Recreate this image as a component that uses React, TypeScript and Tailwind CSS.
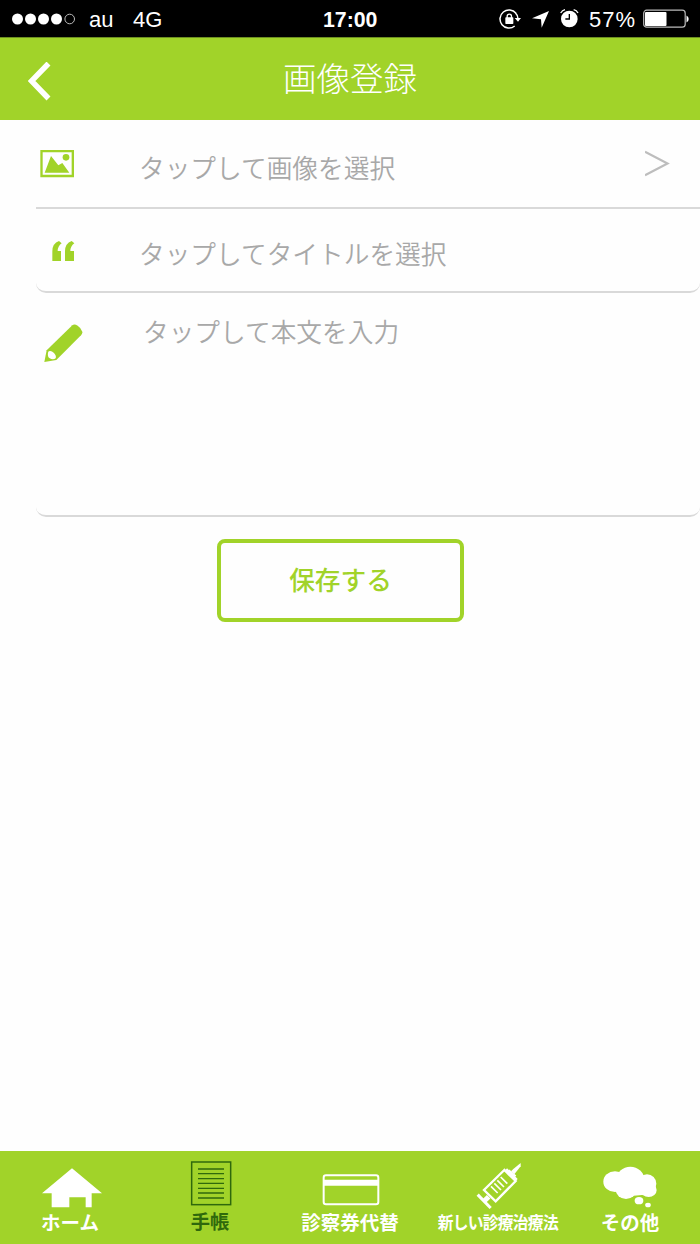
import type { ReactNode } from 'react';

function StatusBar() {
  return (
    <div className="flex h-[37px] shrink-0 items-center bg-black text-[22px] leading-none text-white">
      <svg className="ml-3 shrink-0" width="64" height="14" viewBox="0 0 64 14" fill="#fff">
        <circle cx="5.5" cy="7" r="5.5" />
        <circle cx="18.5" cy="7" r="5.5" />
        <circle cx="31.5" cy="7" r="5.5" />
        <circle cx="44.5" cy="7" r="5.5" />
        <circle cx="57.7" cy="7" r="4.8" fill="none" stroke="#bbb" strokeWidth="1" />
      </svg>
      <span className="ml-[13px] mt-[2px] w-[44px]">au</span>
      <span className="mt-[2px] w-[190px]">4G</span>
      <span className="mt-[4px] w-[175px] text-[21.3px] font-bold">17:00</span>
      <svg className="ml-px shrink-0" width="22" height="22" viewBox="0 0 66 66">
        <path d="M51 16A27 27 0 1 0 47 54M49 14A27 27 0 0 1 57 32" fill="none" stroke="#fff" strokeWidth="4.5" />
        <path d="M47 30h19l-9 11z" fill="#fff" />
        <rect x="19" y="28" width="24" height="20" rx="2" fill="#fff" />
        <path d="M24.500 31v-6a6.500 6.500 0 0 1 13 0v6" fill="none" stroke="#fff" strokeWidth="4" />
      </svg>
      <svg className="ml-[11px] mt-[2px] shrink-0" width="17" height="17" viewBox="0 0 51 51">
        <path d="M51 0 29 50 27 25 0 22z" fill="#fff" />
      </svg>
      <svg className="ml-[11px] shrink-0" width="19" height="19" viewBox="0 0 57 57">
        <circle cx="28" cy="30" r="25" fill="#fff" />
        <path d="M28 15v15H16" fill="none" stroke="#000" strokeWidth="4" />
        <path d="M2 12Q7 4 15 2M41 2Q50 4 54 12" fill="none" stroke="#fff" strokeWidth="4" />
      </svg>
      <span className="ml-[10px] mt-[2px] w-[54px] tracking-[1px]">57%</span>
      <svg className="shrink-0" width="46" height="20" viewBox="0 0 46 20">
        <rect x="0.700" y="1.200" width="41.500" height="17" rx="3" fill="none" stroke="#bbb" strokeWidth="1.200" />
        <rect x="2" y="3" width="21.500" height="14" rx="1" fill="#fff" />
        <path d="M43.500 6.500q2.200 1 2.200 3.500t-2.200 3.500z" fill="#fff" />
      </svg>
    </div>
  );
}

function Header() {
  return (
    <header className="grid h-[83px] shrink-0 grid-cols-[250px_200px_250px] border-t border-[#6d9020] bg-[#a1d329]">
      <button className="ml-7 mt-[24px] h-[40px] w-[24px]" aria-label="戻る">
        <svg width="24" height="40" viewBox="0 0 24 40">
          <path d="M20.500 1.500 3.500 19 20.500 36.500" fill="none" stroke="#fff" strokeWidth="5.500" />
        </svg>
      </button>
      <h1 className="mt-[17px] text-center text-[33.5px] font-light leading-[50px] text-white">画像登録</h1>
    </header>
  );
}

function ImageIcon() {
  return (
    <svg width="34" height="28" viewBox="0 0 102 84" fill="#a1d329">
      <path fillRule="evenodd" d="M1 0h101v82H1zM8 7v67h87V7z" />
      <path d="M14 68 33 18 55 46 67 39 88 68z" />
      <circle cx="78" cy="22" r="10" />
    </svg>
  );
}

function QuoteIcon() {
  return (
    <svg width="23" height="21" viewBox="0 0 69 63" fill="#a1d329">
      <path d="M1 60V31Q1 7 21 0L29 7Q17 16 17 30H27V60z" />
      <path d="M39 60V31Q39 7 59 0L67 7Q55 16 55 30H66V60z" />
    </svg>
  );
}

function PencilIcon() {
  return (
    <svg width="39" height="39" viewBox="0 0 117 117">
      <path d="M1 114 8 79 85 4Q91-1 101 5 112 12 115 23 116 29 111 34L37 108z" fill="#a1d329" />
      <path d="M14 82Q21 78 30 87 38 96 35 103 27 109 17 103 10 99 12 86z" fill="#fff" />
    </svg>
  );
}

function Form() {
  return (
    <main className="flex flex-1 flex-col pl-9 text-[25.7px] font-[350] leading-[38px] text-[#a8a8a8]">
      <div className="flex h-[89px] items-start border-b-2 border-[#d9d9d9]">
        <div className="w-[103px] pl-[4px] pt-[30px]"><ImageIcon /></div>
        <span className="mt-[30px] w-[506px]">タップして画像を選択</span>
        <svg className="mt-[30px]" width="25" height="27" viewBox="0 0 25 27">
          <path d="M0 1.700 22.500 13.500 0 25.300" fill="none" stroke="#bdbdbd" strokeWidth="2.200" />
        </svg>
      </div>
      <div className="flex h-[84px] items-start rounded-b-[10px] border-b-2 border-[#d9d9d9]">
        <div className="w-[103px] pl-[16px] pt-[32px]"><QuoteIcon /></div>
        <span className="mt-[27px]">タップしてタイトルを選択</span>
      </div>
      <div className="flex h-[224px] items-start rounded-b-[10px] border-b-2 border-[#d9d9d9]">
        <div className="w-[107px] pl-[8px] pt-[31px]"><PencilIcon /></div>
        <span className="mt-[21px]">タップして本文を入力</span>
      </div>
      <button className="ml-[181px] mt-[22px] h-[83px] w-[247px] rounded-[8px] border-4 border-[#a1d329] text-[25.700px] font-medium text-[#a1d329]">
        保存する
      </button>
    </main>
  );
}

function HomeIcon() {
  return (
    <svg width="60" height="40" viewBox="0 0 180 120" fill="#fff">
      <path d="M90 1 180 76H149V118H131V88H82V118H29V76H0z" />
    </svg>
  );
}

function NotebookIcon() {
  return (
    <svg width="42" height="45" viewBox="0 0 126 135" fill="none" stroke="#2f690c">
      <rect x="5" y="3" width="117" height="128" strokeWidth="4.500" />
      <path d="M24 24h78M24 38h78M24 53h78M24 67h78M24 82h78M24 96h78M24 111h78" strokeWidth="4" />
    </svg>
  );
}

function CardIcon() {
  return (
    <svg width="58" height="32" viewBox="0 0 174 96">
      <rect x="5" y="4" width="164" height="87" rx="7" fill="none" stroke="#fff" strokeWidth="6" />
      <path d="M5 17h164v18H5z" fill="#fff" />
    </svg>
  );
}

function SyringeIcon() {
  return (
    <svg width="46" height="48" viewBox="137 66 138 144" fill="none" stroke="#fff">
      <path d="M271 69V79L252 103 242 94 249 87z" fill="#fff" stroke="none" />
      <path d="M222 90 161 150 196 184 256 123z" strokeWidth="7" />
      <path d="M227 88 259 120M234 92 255 110" strokeWidth="9" />
      <path d="M142 164 181 204" strokeWidth="9" />
      <path d="M161 184 175 170" strokeWidth="15" />
      <path d="M182 139 202 159M192 130 212 150M201 121 221 141M211 111 231 131" strokeWidth="5" />
    </svg>
  );
}

function CloudIcon() {
  return (
    <svg width="54" height="42" viewBox="518 78 162 126" fill="#fff">
      <ellipse cx="554" cy="125" rx="35" ry="31" />
      <ellipse cx="600" cy="120" rx="42" ry="40" />
      <ellipse cx="650" cy="131" rx="28" ry="28" />
      <ellipse cx="587" cy="149" rx="31" ry="28" />
      <ellipse cx="655" cy="150" rx="24" ry="21" />
      <path d="M575 120h90v48l-30-3-25 2-35-5z" />
      <ellipse cx="626" cy="182" rx="13" ry="11" />
      <ellipse cx="653" cy="195" rx="8.500" ry="7" />
    </svg>
  );
}

function Tab({ icon, label, iconClass, labelClass }: { icon: ReactNode; label: string; iconClass: string; labelClass: string }) {
  return (
    <a className="flex flex-col items-center">
      <div className={`flex h-[59px] w-full shrink-0 items-start justify-center ${iconClass}`}>{icon}</div>
      <span className={`whitespace-nowrap leading-[26px] ${labelClass}`}>{label}</span>
    </a>
  );
}

function TabBar() {
  return (
    <nav className="grid h-[93px] shrink-0 grid-cols-[repeat(5,140px)] bg-[#a1d329]">
      <Tab icon={<HomeIcon />} label="ホーム" iconClass="pt-[17px] pl-[3px]" labelClass="text-[19.5px] font-bold text-white" />
      <Tab icon={<NotebookIcon />} label="手帳" iconClass="pt-[10px] pl-[2px]" labelClass="text-[19.3px] font-bold text-[#2f690c]" />
      <Tab icon={<CardIcon />} label="診察券代替" iconClass="pt-[23px] pl-[2px]" labelClass="text-[19.5px] font-bold text-white" />
      <Tab icon={<SyringeIcon />} label="新しい診療治療法" iconClass="pt-[11px] pl-[18px]" labelClass="ml-[16px] scale-x-90 text-[17.5px] font-bold tracking-[-0.8px] text-white" />
      <Tab icon={<CloudIcon />} label="その他" iconClass="pt-[15px]" labelClass="text-[19.5px] font-bold text-white" />
    </nav>
  );
}

export default function App() {
  return (
    <div className="flex h-[1244px] w-[700px] flex-col overflow-hidden bg-[#fefefe] font-['Liberation_Sans','Noto_Sans_CJK_JP',sans-serif]">
      <StatusBar />
      <Header />
      <Form />
      <TabBar />
    </div>
  );
}
